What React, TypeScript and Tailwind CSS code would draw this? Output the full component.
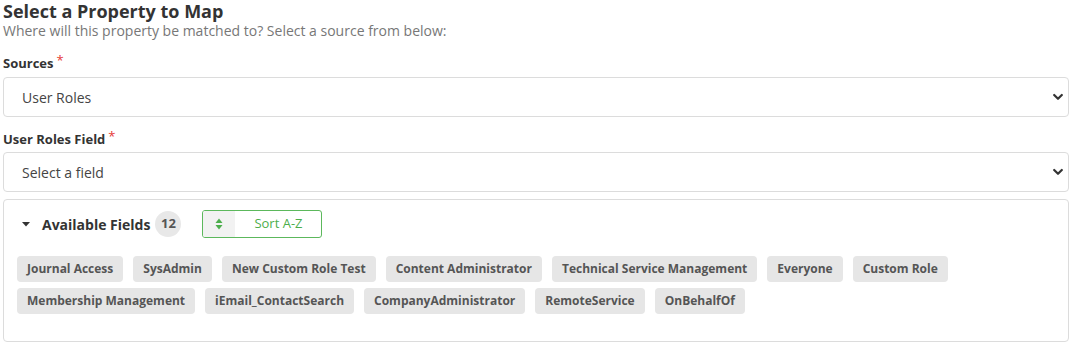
import React from "react";

const tags1 = [
  "Journal Access",
  "SysAdmin",
  "New Custom Role Test",
  "Content Administrator",
  "Technical Service Management",
  "Everyone",
  "Custom Role",
];
const tags2 = [
  "Membership Management",
  "iEmail_ContactSearch",
  "CompanyAdministrator",
  "RemoteService",
  "OnBehalfOf",
];

function Chevron() {
  return (
    <svg
      className="pointer-events-none absolute right-[6px] top-1/2 -translate-y-1/2"
      width="10"
      height="8"
      viewBox="0 0 10 8"
    >
      <path d="M1.2 2 L5 5.8 L8.8 2" fill="none" stroke="#333" strokeWidth="2.2" strokeLinecap="round" strokeLinejoin="round" />
    </svg>
  );
}

function SelectBox({ value, options }: { value: string; options: string[] }) {
  return (
    <div className="relative w-[1066px]">
      <select
        defaultValue={value}
        className="block h-[40px] w-full appearance-none rounded-[4px] border border-[#dcdcdc] bg-white pl-[18px] text-[14px] text-[#444] outline-none"
        style={{ fontFamily: '"Open Sans", sans-serif' }}
      >
        {options.map((o) => (
          <option key={o}>{o}</option>
        ))}
      </select>
      <Chevron />
    </div>
  );
}

function Tag({ label }: { label: string }) {
  return (
    <span className="flex h-[26px] items-center rounded-[4px] bg-[#e6e6e6] px-[10px] text-[12px] font-bold text-[#555]">
      {label}
    </span>
  );
}

export default function App() {
  return (
    <div
      className="h-[345px] w-[1074px] overflow-hidden bg-white pl-[3px]"
      style={{ fontFamily: '"Open Sans", sans-serif' }}
    >
      <h1 className="text-[18px] font-bold leading-[22px] text-[#333]">Select a Property to Map</h1>
      <p className="text-[14px] leading-[18px] text-[#777]">
        Where will this property be matched to? Select a source from below:
      </p>

      <div className="mt-[14px] mb-[5px] flex text-[13px] font-bold leading-[18px] text-[#333]">
        Sources<span className="ml-[3px] -mt-[3px] font-normal text-[#e53935]">*</span>
      </div>
      <SelectBox value="User Roles" options={["User Roles", "Contacts", "Organizations"]} />

      <div className="mt-[13px] mb-[4px] flex text-[13px] font-bold leading-[18px] text-[#333]">
        User Roles Field<span className="ml-[3px] -mt-[3px] font-normal text-[#e53935]">*</span>
      </div>
      <SelectBox value="Select a field" options={["Select a field"]} />

      <div className="mt-[7px] h-[143px] w-[1066px] rounded-[4px] border border-[#dcdcdc] pl-[13px] pt-[10px]">
        <div className="flex h-[28px] items-center">
          <svg className="ml-[5px]" width="8" height="5" viewBox="0 0 8 5">
            <path d="M0 0 L8 0 L4 4.5 Z" fill="#333" />
          </svg>
          <span className="ml-[12px] text-[14px] font-bold text-[#333]">Available Fields</span>
          <span className="ml-[5px] flex h-[26px] w-[26px] items-center justify-center rounded-full bg-[#e8e8e8] text-[13px] font-bold text-[#555]">
            12
          </span>
          <button className="ml-[21px] flex h-[28px] w-[120px] overflow-hidden rounded-[3px] border border-[#5cb85c] bg-white">
            <span className="flex h-full w-[32px] items-center justify-center bg-[#f2f2f2]">
              <svg width="8" height="12" viewBox="0 0 8 12">
                <path d="M4 0.5 L7.5 5 L0.5 5 Z" fill="#4cae4c" />
                <path d="M0.5 7 L7.5 7 L4 11.5 Z" fill="#4cae4c" />
              </svg>
            </span>
            <span className="flex flex-1 items-center justify-center text-[13px] text-[#4cae4c]">Sort A-Z</span>
          </button>
        </div>
        <div className="mt-[18px] flex flex-col gap-[6px]">
          <div className="flex gap-[10px]">
            {tags1.map((t) => (
              <Tag key={t} label={t} />
            ))}
          </div>
          <div className="flex gap-[10px]">
            {tags2.map((t) => (
              <Tag key={t} label={t} />
            ))}
          </div>
        </div>
      </div>
    </div>
  );
}
